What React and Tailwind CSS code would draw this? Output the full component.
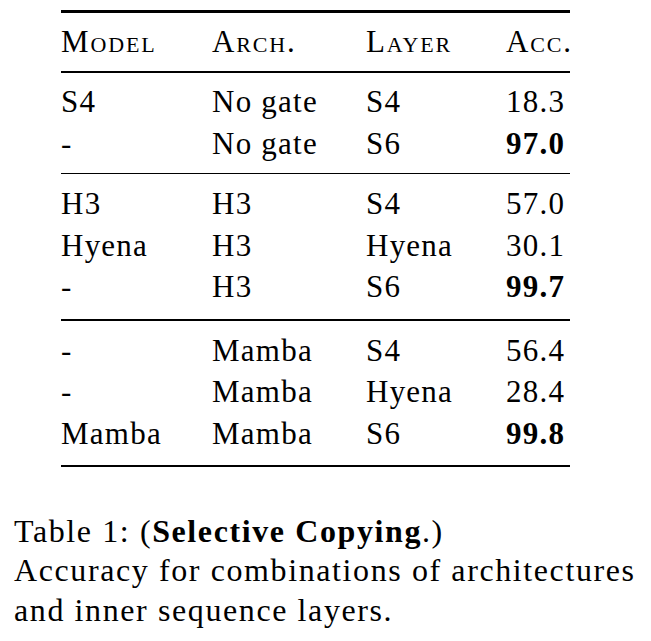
const rows = [
  [
    ["S4", "No gate", "S4", "18.3", false],
    ["-", "No gate", "S6", "97.0", true],
  ],
  [
    ["H3", "H3", "S4", "57.0", false],
    ["Hyena", "H3", "Hyena", "30.1", false],
    ["-", "H3", "S6", "99.7", true],
  ],
  [
    ["-", "Mamba", "S4", "56.4", false],
    ["-", "Mamba", "Hyena", "28.4", false],
    ["Mamba", "Mamba", "S6", "99.8", true],
  ],
];

const cols = "grid grid-cols-[151px_154px_140px_1fr]";

const Row = ({ cells, bold }) => (
  <div className={`${cols} leading-[41.5px]`}>
    <span>{cells[0]}</span>
    <span>{cells[1]}</span>
    <span>{cells[2]}</span>
    <span className={bold ? "font-bold" : ""}>{cells[3]}</span>
  </div>
);

const App = () => {
  return (
    <div
      className="w-[651px] h-[641px] bg-white text-black overflow-hidden"
      style={{ fontFamily: '"Liberation Serif", "Times New Roman", serif' }}
    >
      {/* table */}
      <section className="ml-[61px] w-[509px] pt-[10px] text-[31px] tracking-[0.04em]">
        <div className="h-[3px] bg-black" />
        <div className={`${cols} leading-[42px] pt-[8px] pb-[8px] [font-variant:small-caps] tracking-[0.06em]`}>
          <span>Model</span>
          <span>Arch.</span>
          <span>Layer</span>
          <span>Acc.</span>
        </div>
        <div className="h-[2px] bg-black" />

        <div className="pt-[8px] pb-[9px]">
          {rows[0].map((r, i) => (
            <Row key={i} cells={r} bold={r[4]} />
          ))}
        </div>
        <div className="h-px bg-black" />

        <div className="pt-[9px] pb-[11px]">
          {rows[1].map((r, i) => (
            <Row key={i} cells={r} bold={r[4]} />
          ))}
        </div>
        <div className="h-[2px] bg-black" />

        <div className="pt-[9px] pb-[10.5px]">
          {rows[2].map((r, i) => (
            <Row key={i} cells={r} bold={r[4]} />
          ))}
        </div>
        <div className="h-[2px] bg-black" />
      </section>

      {/* caption */}
      <p className="mt-[45px] ml-[14px] text-[32px] leading-[39.5px] tracking-[0.05em] whitespace-nowrap">
        Table 1: (<span className="font-bold">Selective Copying</span>.)
        <br />
        Accuracy for combinations of architectures
        <br />
        and inner sequence layers.
      </p>
    </div>
  );
};

export default App;
